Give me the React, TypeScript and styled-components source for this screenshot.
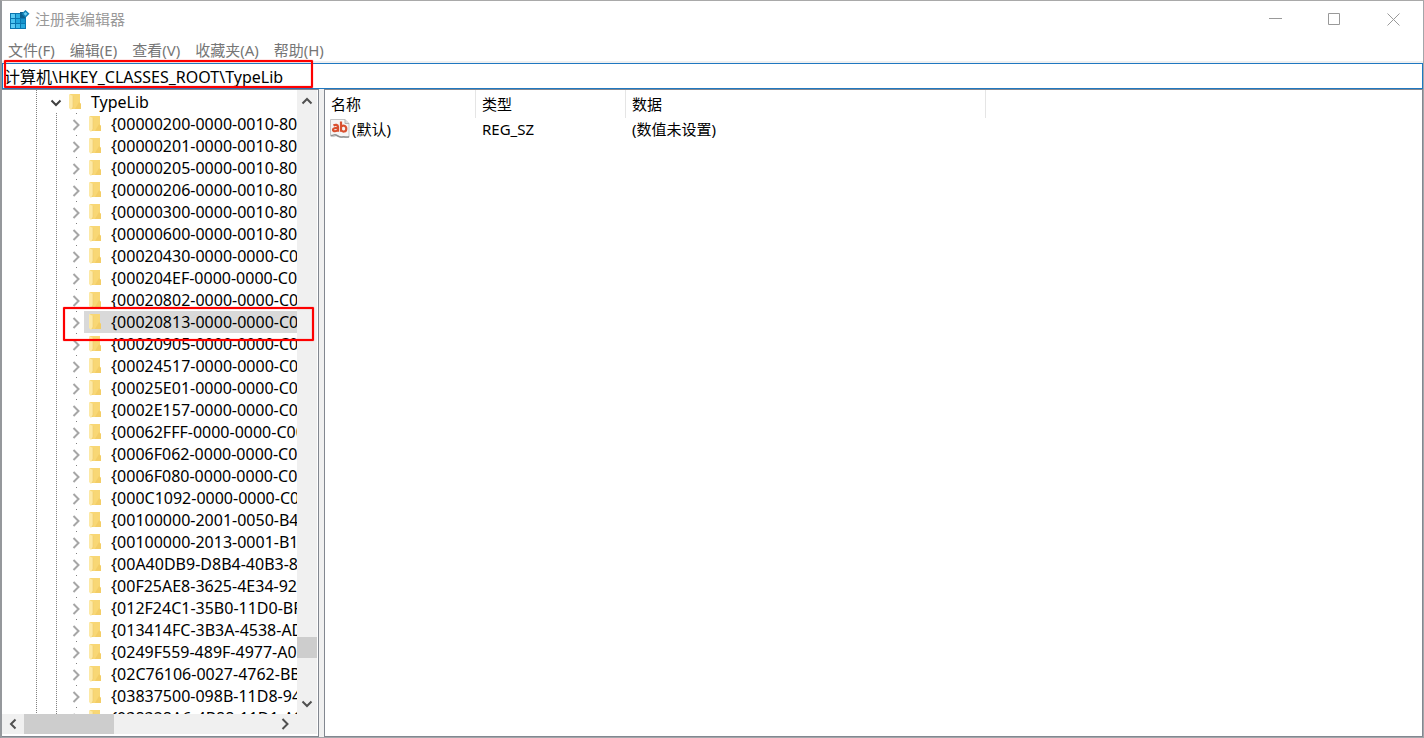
import React from "react";
import styled, { createGlobalStyle } from "styled-components";

const GlobalStyle = createGlobalStyle`
  *, *::before, *::after { box-sizing: border-box; }
  html, body { margin: 0; padding: 0; }
  body {
    font-family: "Noto Sans", "Noto Sans CJK SC", sans-serif;
    font-size: 15px;
    line-height: 22px;
    color: #000;
    overflow: hidden;
  }
  button, input, table {
    font: inherit;
    color: inherit;
  }
  button {
    background: none;
    border: 0;
    padding: 0;
    margin: 0;
  }
`;

const Window = styled.div`
  display: flex;
  flex-direction: column;
  height: 100vh;
  background: #fff;
  border-top: 1px solid #a9a9a9;
  border-left: 2px solid #95989c;
  border-right: 1px solid #a3a6aa;
  border-bottom: 1px solid #a3a6aa;
`;

const TitleBar = styled.header`
  display: flex;
  align-items: center;
  flex: none;
  height: 37px;
  padding-left: 8px;
  gap: 5px;
  color: #999;
`;

const Title = styled.h1`
  flex: 1;
  margin: 0;
  padding-bottom: 2px;
  font-size: 15px;
  font-weight: 400;
`;

const CaptionButtons = styled.div`
  display: flex;
  height: 100%;
`;

const CaptionButton = styled.button`
  display: flex;
  align-items: center;
  justify-content: center;
  width: 59px;
`;

const MenuBar = styled.nav`
  display: flex;
  flex: none;
  gap: 15px;
  height: 23px;
  padding-left: 6px;
  color: #767676;
`;

const MenuItem = styled.button`
  line-height: 24px;
  white-space: nowrap;
`;

const AddressBar = styled.div`
  position: relative;
  flex: none;
  padding-top: 2px;
  background: #f0f0f0;
`;

const AddressInput = styled.input`
  display: block;
  width: 100%;
  height: 26px;
  padding: 0 1px;
  border: 1px solid #1f78c1;
  border-radius: 0;
  outline: 0;
  background: #fff;
  font-size: 16px;
`;

const Marker = styled.div<{ $left: number; $top: number; $width: number; $height: number }>`
  position: absolute;
  z-index: 2;
  left: ${(p) => p.$left}px;
  top: ${(p) => p.$top}px;
  width: ${(p) => p.$width}px;
  height: ${(p) => p.$height}px;
  border: 2px solid #fe0000;
  border-radius: 1px;
  box-shadow: 0 0 1px #fe0000, inset 0 0 1px #fe0000;
  pointer-events: none;
`;

const Panes = styled.main`
  display: flex;
  flex: 1;
  min-height: 0;
  gap: 5px;
  background: #f0f0f0;
`;

const TreePane = styled.section`
  position: relative;
  display: grid;
  flex: none;
  width: 317px;
  grid-template-columns: minmax(0, 1fr) 20px;
  grid-template-rows: minmax(0, 1fr) 20px;
  padding: 0 1px 2px 0;
  background: #fff;
  border: 1px solid #828790;
  border-left: 0;
`;

const Tree = styled.ul`
  margin: 0;
  padding: 1px 0 0;
  list-style: none;
  overflow: hidden;
  font-size: 16px;
  background: repeating-linear-gradient(#808080 0 1px, transparent 1px 2px) 34px 0 / 1px 100% no-repeat;
`;

const Branch = styled.ul`
  margin: 0;
  padding: 0;
  list-style: none;
  background: repeating-linear-gradient(#808080 0 1px, transparent 1px 2px) 54px 0 / 1px 100% no-repeat;
`;

const TreeRow = styled.div<{ $depth: number }>`
  display: flex;
  height: 22px;
  padding-left: ${(p) => 42 + p.$depth * 20}px;
  background: ${(p) =>
    p.$depth > 0 ? "linear-gradient(#808080, #808080) 74px 0 / 1px 1px no-repeat" : "none"};
`;

const Toggle = styled.button`
  display: flex;
  flex: none;
  align-items: center;
  justify-content: center;
  width: 20px;
  padding: 2px 0 0 3px;
`;

const NodeLabel = styled.span<{ $selected?: boolean }>`
  display: flex;
  flex: 1;
  align-items: center;
  gap: 9px;
  padding: 0 0 1px 5px;
  background: ${(p) => (p.$selected ? "#d9d9d9" : "transparent")};
  line-height: 20px;
  white-space: nowrap;

  svg { flex: none; }
`;

const VScroll = styled.div`
  display: flex;
  flex-direction: column;
  align-items: center;
  justify-content: space-between;
  padding-top: 1px;
  background: #f0f0f0;
`;

const VThumb = styled.div`
  width: 20px;
  height: 21px;
  margin-top: auto;
  margin-bottom: 36px;
  background: #cdcdcd;
`;

const HScroll = styled.div`
  display: flex;
  grid-column: 1 / 3;
  justify-content: space-between;
  padding-right: 21px;
  background: #f0f0f0;
`;

const HThumb = styled.div`
  width: 90px;
  margin-right: auto;
  background: #cdcdcd;
`;

const ScrollButton = styled.button`
  display: flex;
  flex: none;
  align-items: center;
  justify-content: center;
  width: 22px;
  height: 20px;
`;

const ListPane = styled.section`
  flex: 1;
  min-width: 0;
  background: #fff;
  border: 1px solid #828790;
  overflow: hidden;
`;

const ValueTable = styled.table`
  width: 100%;
  table-layout: fixed;
  border-collapse: separate;
  border-spacing: 0;
`;

const HeadCell = styled.th<{ $width?: number }>`
  width: ${(p) => (p.$width ? `${p.$width}px` : "auto")};
  height: 28px;
  padding: 0 0 0 6px;
  border-right: ${(p) => (p.$width ? "1px solid #e5e5e5" : "0")};
  font-weight: 400;
  text-align: left;
`;

const Cell = styled.td`
  height: 22px;
  padding: 0 0 0 6px;
  line-height: 22px;
  white-space: nowrap;
`;

const NameCell = styled.span`
  display: flex;
  align-items: center;
  gap: 2px;
  margin-left: -1px;
`;

function RegeditIcon() {
  return (
    <svg width="20" height="20" viewBox="0 0 20 20" aria-hidden="true">
      <rect x="0" y="3" width="16" height="16" fill="#0a76b0" />
      <rect x="1" y="4" width="4" height="4" fill="#5ccbf3" />
      <rect x="6" y="4" width="4" height="4" fill="#2fb0e3" />
      <rect x="1" y="9" width="4" height="4" fill="#4ac3f0" />
      <rect x="6" y="9" width="4" height="4" fill="#22a5dc" />
      <rect x="11" y="9" width="4" height="4" fill="#1592cb" />
      <rect x="1" y="14" width="4" height="4" fill="#5ccbf3" />
      <rect x="6" y="14" width="4" height="4" fill="#3ab9ea" />
      <rect x="11" y="14" width="4" height="4" fill="#27a9de" />
      <path d="M10 2h3l3 6h-6z" fill="#0b5f8f" />
      <path d="M15.500 0l4 3.700-4 4-4-4z" fill="#1482b8" />
      <path d="M15.500 2l1.900 1.800-1.900 1.900-1.900-1.900z" fill="#6fd0f3" />
    </svg>
  );
}

function FolderIcon() {
  return (
    <svg width="13" height="17" viewBox="0 0 13 17" aria-hidden="true">
      <path d="M1 1h10v9l1 1v5H1z" fill="#f8d775" />
      <path d="M10 9l2 2v5H6z" fill="#f3cd66" />
      <path d="M0 1l4 2v11l-2 3-2-2z" fill="#fde9a6" />
      <path d="M4 3v11l-1 2" fill="none" stroke="#efcb6b" strokeWidth="0.600" />
    </svg>
  );
}

function StringIcon() {
  return (
    <svg width="20" height="20" viewBox="0 0 20 20" aria-hidden="true">
      <path d="M.5.500H15l4 4V18c-3 1.500-5-.500-8 .500-3-1.500-4-2.500-6-1.500-1.500 1-3 .500-4.500 0z" fill="#f5f5f5" stroke="#c4c4c4" />
      <path d="M1 16.500c2 .500 3-1.500 5-.500s3.500 2.500 6 2c3-.800 4 .800 7-.200" fill="none" stroke="#929292" strokeWidth="1.500" />
      <path d="M15 .500v4h4" fill="#dcdcdc" stroke="#b0b0b0" />
      <g fill="none" stroke="#d9502f" strokeWidth="2.200">
        <path d="M3.500 6.500c2-1.200 4.500-.800 4.500 1.200v5M8 9c-3-.300-5 .200-5 1.800 0 2 3.500 2 5-.300" />
        <path d="M11 2.500V12.700M11 8c1.500-2.300 5.300-1.700 5.300 1.700s-3.800 3.700-5.300 1.300" />
      </g>
    </svg>
  );
}

type Direction = "up" | "down" | "left" | "right";

const chevrons: Record<Direction, { w: number; h: number; d: string }> = {
  up: { w: 12, h: 8, d: "M1.500 6.500L6 2l4.500 4.500" },
  down: { w: 12, h: 8, d: "M1.500 1.500L6 6l4.500-4.500" },
  left: { w: 8, h: 12, d: "M6.500 1.500L2 6l4.500 4.500" },
  right: { w: 8, h: 12, d: "M1.500 1L6.500 6l-5 5" },
};

function Chevron({ dir, color = "#505050" }: { dir: Direction; color?: string }) {
  const { w, h, d } = chevrons[dir];
  return (
    <svg width={w} height={h} viewBox={`0 0 ${w} ${h}`} aria-hidden="true">
      <path d={d} fill="none" stroke={color} strokeWidth="2" />
    </svg>
  );
}

const menus = ["文件(F)", "编辑(E)", "查看(V)", "收藏夹(A)", "帮助(H)"];

const keys = [
  "{00000200-0000-0010-80",
  "{00000201-0000-0010-80",
  "{00000205-0000-0010-80",
  "{00000206-0000-0010-80",
  "{00000300-0000-0010-80",
  "{00000600-0000-0010-80",
  "{00020430-0000-0000-C0",
  "{000204EF-0000-0000-C00",
  "{00020802-0000-0000-C0",
  "{00020813-0000-0000-C0",
  "{00020905-0000-0000-C0",
  "{00024517-0000-0000-C0",
  "{00025E01-0000-0000-C0",
  "{0002E157-0000-0000-C0",
  "{00062FFF-0000-0000-C00",
  "{0006F062-0000-0000-C0",
  "{0006F080-0000-0000-C0",
  "{000C1092-0000-0000-C0",
  "{00100000-2001-0050-B4",
  "{00100000-2013-0001-B1",
  "{00A40DB9-D8B4-40B3-8B",
  "{00F25AE8-3625-4E34-92",
  "{012F24C1-35B0-11D0-BF",
  "{013414FC-3B3A-4538-AD",
  "{0249F559-489F-4977-A0",
  "{02C76106-0027-4762-BB",
  "{03837500-098B-11D8-94",
  "{038328A6-4B88-11D1-A9",
];

const selectedKey = "{00020813-0000-0000-C0";

export default function App() {
  return (
    <>
      <GlobalStyle />
      <Window>
        <TitleBar>
          <RegeditIcon />
          <Title>注册表编辑器</Title>
          <CaptionButtons>
            <CaptionButton aria-label="最小化">
              <svg width="13" height="13" viewBox="0 0 13 13">
                <path d="M0 5.500h13" stroke="#999" />
              </svg>
            </CaptionButton>
            <CaptionButton aria-label="最大化">
              <svg width="13" height="13" viewBox="0 0 13 13">
                <path d="M.5.500h11v11H.5z" fill="none" stroke="#999" />
              </svg>
            </CaptionButton>
            <CaptionButton aria-label="关闭">
              <svg width="13" height="13" viewBox="0 0 13 13">
                <path d="M.5.500l12 12M12.500.500l-12 12" stroke="#999" />
              </svg>
            </CaptionButton>
          </CaptionButtons>
        </TitleBar>

        <MenuBar aria-label="菜单">
          {menus.map((label) => (
            <MenuItem key={label}>{label}</MenuItem>
          ))}
        </MenuBar>

        <AddressBar>
          <AddressInput aria-label="地址" defaultValue={"计算机\\HKEY_CLASSES_ROOT\\TypeLib"} />
          <Marker $left={2} $top={-1} $width={309} $height={28} />
        </AddressBar>

        <Panes>
          <TreePane>
            <Tree>
              <li>
                <TreeRow $depth={0}>
                  <Toggle aria-label="折叠">
                    <Chevron dir="down" color="#404040" />
                  </Toggle>
                  <NodeLabel>
                    <FolderIcon />
                    TypeLib
                  </NodeLabel>
                </TreeRow>
                <Branch>
                  {keys.map((name) => (
                    <li key={name}>
                      <TreeRow $depth={1}>
                        <Toggle aria-label="展开">
                          <Chevron dir="right" color="#a6a6a6" />
                        </Toggle>
                        <NodeLabel $selected={name === selectedKey}>
                          <FolderIcon />
                          {name}
                        </NodeLabel>
                      </TreeRow>
                    </li>
                  ))}
                </Branch>
              </li>
            </Tree>
            <VScroll>
              <ScrollButton aria-label="向上滚动">
                <Chevron dir="up" />
              </ScrollButton>
              <VThumb />
              <ScrollButton aria-label="向下滚动">
                <Chevron dir="down" />
              </ScrollButton>
            </VScroll>
            <HScroll>
              <ScrollButton aria-label="向左滚动">
                <Chevron dir="left" />
              </ScrollButton>
              <HThumb />
              <ScrollButton aria-label="向右滚动">
                <Chevron dir="right" />
              </ScrollButton>
            </HScroll>
            <Marker $left={61} $top={217} $width={251} $height={34} />
          </TreePane>

          <ListPane>
            <ValueTable>
              <thead>
                <tr>
                  <HeadCell scope="col" $width={151}>名称</HeadCell>
                  <HeadCell scope="col" $width={150}>类型</HeadCell>
                  <HeadCell scope="col" $width={360}>数据</HeadCell>
                  <HeadCell as="td" />
                </tr>
              </thead>
              <tbody>
                <tr>
                  <Cell>
                    <NameCell>
                      <StringIcon />
                      (默认)
                    </NameCell>
                  </Cell>
                  <Cell>REG_SZ</Cell>
                  <Cell>(数值未设置)</Cell>
                  <Cell />
                </tr>
              </tbody>
            </ValueTable>
          </ListPane>
        </Panes>
      </Window>
    </>
  );
}
